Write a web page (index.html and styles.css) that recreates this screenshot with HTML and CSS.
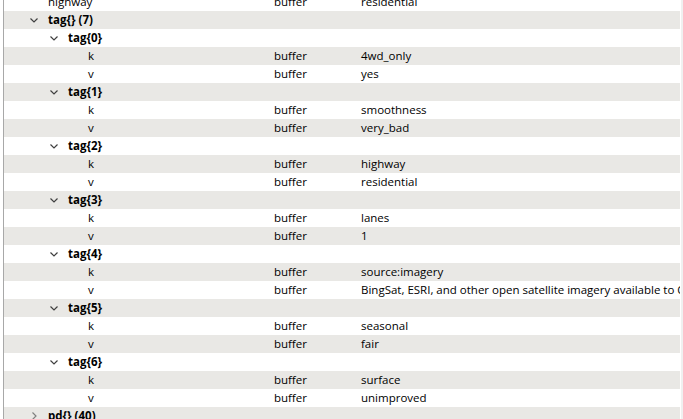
FILE: index.html
```html
<!DOCTYPE html>
<html lang="en">
<head>
<meta charset="UTF-8" />
<title>Tree</title>
<link rel="stylesheet" href="styles.css">
</head>
<body>
  <div class="frame">
    <div class="tree">
      <div class="row"><div class="name lvl1"><span class="tw"></span>highway</div><div>buffer</div><div>residential</div></div>
      <div class="row alt"><div class="name lvl1 node"><span class="tw"><svg viewBox="0 0 8 5"><path d="M0.5 0.5 L4 4 L7.5 0.5"/></svg></span>tag{} (7)</div><div></div><div></div></div>

      <div class="row"><div class="name lvl2 node"><span class="tw"><svg viewBox="0 0 8 5"><path d="M0.5 0.5 L4 4 L7.5 0.5"/></svg></span>tag{0}</div><div></div><div></div></div>
      <div class="row alt"><div class="name lvl3"><span class="tw"></span>k</div><div>buffer</div><div>4wd_only</div></div>
      <div class="row"><div class="name lvl3"><span class="tw"></span>v</div><div>buffer</div><div>yes</div></div>

      <div class="row alt"><div class="name lvl2 node"><span class="tw"><svg viewBox="0 0 8 5"><path d="M0.5 0.5 L4 4 L7.5 0.5"/></svg></span>tag{1}</div><div></div><div></div></div>
      <div class="row"><div class="name lvl3"><span class="tw"></span>k</div><div>buffer</div><div>smoothness</div></div>
      <div class="row alt"><div class="name lvl3"><span class="tw"></span>v</div><div>buffer</div><div>very_bad</div></div>

      <div class="row"><div class="name lvl2 node"><span class="tw"><svg viewBox="0 0 8 5"><path d="M0.5 0.5 L4 4 L7.5 0.5"/></svg></span>tag{2}</div><div></div><div></div></div>
      <div class="row alt"><div class="name lvl3"><span class="tw"></span>k</div><div>buffer</div><div>highway</div></div>
      <div class="row"><div class="name lvl3"><span class="tw"></span>v</div><div>buffer</div><div>residential</div></div>

      <div class="row alt"><div class="name lvl2 node"><span class="tw"><svg viewBox="0 0 8 5"><path d="M0.5 0.5 L4 4 L7.5 0.5"/></svg></span>tag{3}</div><div></div><div></div></div>
      <div class="row"><div class="name lvl3"><span class="tw"></span>k</div><div>buffer</div><div>lanes</div></div>
      <div class="row alt"><div class="name lvl3"><span class="tw"></span>v</div><div>buffer</div><div>1</div></div>

      <div class="row"><div class="name lvl2 node"><span class="tw"><svg viewBox="0 0 8 5"><path d="M0.5 0.5 L4 4 L7.5 0.5"/></svg></span>tag{4}</div><div></div><div></div></div>
      <div class="row alt"><div class="name lvl3"><span class="tw"></span>k</div><div>buffer</div><div>source:imagery</div></div>
      <div class="row"><div class="name lvl3"><span class="tw"></span>v</div><div>buffer</div><div>BingSat, ESRI, and other open satellite imagery available to OpenStreetMap</div></div>

      <div class="row alt"><div class="name lvl2 node"><span class="tw"><svg viewBox="0 0 8 5"><path d="M0.5 0.5 L4 4 L7.5 0.5"/></svg></span>tag{5}</div><div></div><div></div></div>
      <div class="row"><div class="name lvl3"><span class="tw"></span>k</div><div>buffer</div><div>seasonal</div></div>
      <div class="row alt"><div class="name lvl3"><span class="tw"></span>v</div><div>buffer</div><div>fair</div></div>

      <div class="row"><div class="name lvl2 node"><span class="tw"><svg viewBox="0 0 8 5"><path d="M0.5 0.5 L4 4 L7.5 0.5"/></svg></span>tag{6}</div><div></div><div></div></div>
      <div class="row alt"><div class="name lvl3"><span class="tw"></span>k</div><div>buffer</div><div>surface</div></div>
      <div class="row"><div class="name lvl3"><span class="tw"></span>v</div><div>buffer</div><div>unimproved</div></div>

      <div class="row alt"><div class="name lvl1 node"><span class="tw"><svg class="closed" viewBox="0 0 5 8"><path d="M0.5 0.5 L4 4 L0.5 7.5"/></svg></span>pd{} (40)</div><div></div><div></div></div>
    </div>
    <div class="scroll"></div>
  </div>
</body>
</html>
```

FILE: styles.css
```css
html, body {
  margin: 0;
  padding: 0;
  background: #fff;
  overflow: hidden;
}
body {
  font-family: 'Open Sans', 'Noto Sans', sans-serif;
  font-size: 11.5px;
  color: #000;
}
.frame {
  display: flex;
  height: 419px;
  margin-left: 3px;
  border-left: 1px solid #a8a8a8;
}
.tree {
  flex: 1;
  margin-top: -7px;
  overflow: hidden;
}
.scroll {
  width: 2px;
  margin-left: 1px;
  background: #f0f0f0;
}
.row {
  display: grid;
  grid-template-columns: 266px 87px 1fr;
  height: 18px;
  line-height: 18px;
  white-space: nowrap;
}
.row.alt {
  background: #e9e8e5;
}
.row > div {
  overflow: hidden;
  padding-left: 4px;
}
.row > .name {
  display: flex;
  align-items: center;
  padding-left: 0;
}
.name.lvl1 { padding-left: 24px; }
.name.lvl2 { padding-left: 44px; }
.name.lvl3 { padding-left: 64px; }
.node {
  font-weight: 700;
}
.tw {
  width: 20px;
  height: 18px;
  flex: none;
  display: flex;
  align-items: center;
}
.tw svg {
  width: 8px;
  height: 5px;
  margin-left: 2px;
  fill: none;
  stroke: #404040;
  stroke-width: 1.2;
}
.tw svg.closed {
  width: 5px;
  height: 8px;
  margin-left: 4px;
  stroke: #808080;
}
```
